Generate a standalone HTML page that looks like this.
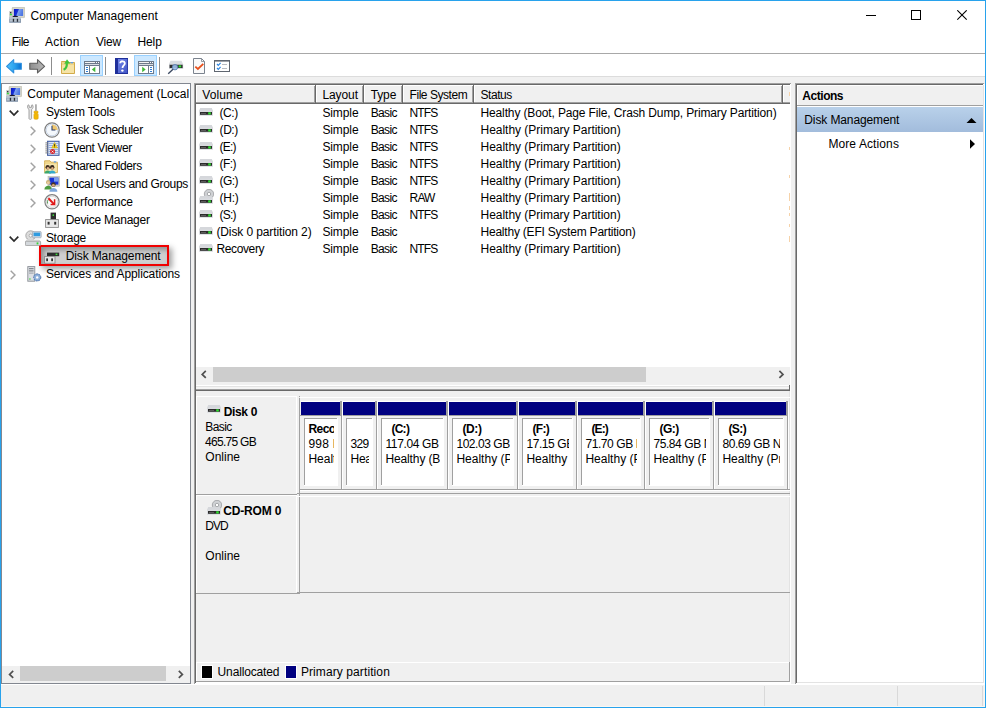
<!DOCTYPE html>
<html>
<head>
<meta charset="utf-8">
<title>Computer Management</title>
<style>
html,body{margin:0;padding:0;}
body{width:986px;height:708px;overflow:hidden;background:#fff;font-family:"Liberation Sans",sans-serif;font-size:12px;color:#000;position:relative;}
.a{position:absolute;display:block;}
.t{position:absolute;white-space:nowrap;line-height:14px;height:14px;font-size:12px;}
.b{font-weight:bold;}

</style>
</head>
<body>
<div class="a " style="left:0px;top:0px;width:986px;height:708px;background:#28a2ec;"></div>
<div class="a " style="left:1px;top:1px;width:984px;height:706px;background:#fff;"></div>
<div class="a " style="left:1px;top:53px;width:984px;height:1px;background:#a8a8a8;"></div>
<div class="a " style="left:1px;top:76px;width:984px;height:631px;background:#f0f0f0;"></div>
<div class="a " style="left:1px;top:76px;width:984px;height:1px;background:#dcdcdc;"></div>
<div class="t " style="left:30.4px;top:9px;letter-spacing:0.07px;">Computer Management</div>
<svg class="a" style="left:866px;top:10px;" width="12" height="12" viewBox="0 0 12 12"><path d="M0 5.5H10" stroke="#000" stroke-width="1" fill="none"/></svg>
<svg class="a" style="left:911px;top:10px;" width="12" height="12" viewBox="0 0 12 12"><rect x="0.5" y="0.5" width="9" height="9" stroke="#000" stroke-width="1" fill="none"/></svg>
<svg class="a" style="left:957px;top:10px;" width="12" height="12" viewBox="0 0 12 12"><path d="M0.3 0.3L9.7 9.7M9.7 0.3L0.3 9.7" stroke="#000" stroke-width="1.1" fill="none"/></svg>
<div class="t " style="left:11.8px;top:35px;letter-spacing:-0.536px;">File</div>
<div class="t " style="left:45px;top:35px;letter-spacing:0.19px;">Action</div>
<div class="t " style="left:95.9px;top:35px;letter-spacing:-0.149px;">View</div>
<div class="t " style="left:137.5px;top:35px;letter-spacing:-0.122px;">Help</div>
<div class="a " style="left:51px;top:57px;width:1px;height:18px;background:#8d8d8d;"></div>
<div class="a " style="left:105px;top:57px;width:1px;height:18px;background:#8d8d8d;"></div>
<div class="a " style="left:159px;top:57px;width:1px;height:18px;background:#8d8d8d;"></div>
<div class="a " style="left:80px;top:55px;width:23px;height:21px;background:#cce8ff;border:1px solid #99d1ff;box-sizing:border-box;"></div>
<div class="a " style="left:134px;top:55px;width:23px;height:21px;background:#cce8ff;border:1px solid #99d1ff;box-sizing:border-box;"></div>
<svg class="a" style="left:6px;top:59px;" width="16" height="15" viewBox="0 0 16 15"><defs><linearGradient id="gb" x1="0" x2="1" y1="0" y2="0"><stop offset="0" stop-color="#52c0f8"/><stop offset="0.55" stop-color="#2aa2ee"/><stop offset="1" stop-color="#0a6fd0"/></linearGradient></defs>
<path d="M0.6 7.3L7.7 0.7V4.3H15.3V10.3H7.7V13.9Z" fill="url(#gb)" stroke="#2b8fde" stroke-width="1.1" stroke-linejoin="round"/></svg>
<svg class="a" style="left:29px;top:59px;" width="17" height="15" viewBox="0 0 17 15"><defs><linearGradient id="gf" x1="0" x2="1" y1="0" y2="0"><stop offset="0" stop-color="#8e8e8e"/><stop offset="1" stop-color="#b8b8b8"/></linearGradient></defs>
<path d="M15.6 7.3L8.5 0.7V4.3H0.8V10.3H8.5V13.9Z" fill="url(#gf)" stroke="#5e5e5e" stroke-width="1.1" stroke-linejoin="round"/></svg>
<svg class="a" style="left:61px;top:58px;" width="15" height="16" viewBox="0 0 15 16"><path d="M0.5 4.5V3.5H5.5L6.5 4.5H13.5V15.5H0.5Z" fill="#efd587" stroke="#d2ab4a" stroke-width="1"/>
<rect x="1" y="7" width="12" height="8" fill="#f6e3a6"/>
<rect x="9.5" y="4" width="2.6" height="1.3" fill="#5b9be6"/>
<path d="M2.6 11.8C5.2 10.5 6 8 5.8 5.2" stroke="#3fc43a" stroke-width="2.2" fill="none"/>
<path d="M3.2 5.8L6 1.2L9.2 5.6Z" fill="#3fc43a"/></svg>
<svg class="a" style="left:84px;top:61px;" width="16" height="13" viewBox="0 0 16 13"><rect x="0" y="0" width="16" height="13" fill="#6d7a8b"/>
<rect x="1" y="1" width="10" height="1" fill="#f2f2f2"/><rect x="12" y="1" width="1" height="1" fill="#fff"/><rect x="14" y="1" width="1" height="1" fill="#fff"/>
<rect x="1" y="3" width="14" height="1" fill="#d8dce2"/><rect x="1" y="5" width="4" height="7" fill="#fff"/><rect x="6" y="5" width="9" height="7" fill="#fff"/>
<rect x="2" y="6" width="2" height="1" fill="#2f7fd6"/><rect x="2" y="8" width="2" height="1" fill="#2f7fd6"/><rect x="2" y="10" width="2" height="1" fill="#2f7fd6"/>
<path d="M11.3 5.8V11.2L7.8 8.5Z" fill="#3fb838"/></svg>
<svg class="a" style="left:138px;top:61px;" width="16" height="13" viewBox="0 0 16 13"><rect x="0" y="0" width="16" height="13" fill="#6d7a8b"/>
<rect x="1" y="1" width="10" height="1" fill="#f2f2f2"/><rect x="12" y="1" width="1" height="1" fill="#fff"/><rect x="14" y="1" width="1" height="1" fill="#fff"/>
<rect x="1" y="3" width="14" height="1" fill="#d8dce2"/><rect x="1" y="5" width="9" height="7" fill="#fff"/><rect x="11" y="5" width="4" height="7" fill="#fff"/>
<rect x="12" y="6" width="2" height="1" fill="#2f7fd6"/><rect x="12" y="8" width="2" height="1" fill="#2f7fd6"/><rect x="12" y="10" width="2" height="1" fill="#2f7fd6"/>
<path d="M4.2 5.8V11.2L7.7 8.5Z" fill="#3fb838"/></svg>
<svg class="a" style="left:115px;top:58px;" width="13" height="16" viewBox="0 0 13 16"><defs><linearGradient id="gh" x1="0" x2="1" y1="0" y2="1"><stop offset="0" stop-color="#7084e6"/><stop offset="1" stop-color="#4256c6"/></linearGradient></defs>
<rect x="0" y="0" width="13" height="16" fill="#1f2f9a"/><rect x="3" y="1" width="9.3" height="14" fill="url(#gh)"/>
<path d="M5.2 5.2C5.2 2.6 9.8 2.6 9.8 5.4C9.8 7.4 7.5 7.6 7.5 10" stroke="#fff" stroke-width="1.8" fill="none"/><circle cx="7.4" cy="12.6" r="1.2" fill="#fff"/></svg>
<svg class="a" style="left:167px;top:60px;" width="17" height="15" viewBox="0 0 17 15"><path d="M3.5 0.8H14.5L16 4H2Z" fill="#d9dce0"/><rect x="2" y="4" width="14.2" height="5" fill="#cfd3d8"/>
<rect x="2.6" y="4.8" width="13" height="3.2" fill="#2c2c2c"/><rect x="11.6" y="5.4" width="2.6" height="2" fill="#2de02d"/>
<circle cx="8" cy="7.2" r="2.7" fill="#9fc0ea" stroke="#5d7fb0" stroke-width="0.9" fill-opacity="0.9"/>
<path d="M6 9.3L1.2 13.8" stroke="#3c4a62" stroke-width="1.4"/></svg>
<svg class="a" style="left:193px;top:58px;" width="13" height="16" viewBox="0 0 13 16"><path d="M0.5 0.5H8.5L11.5 3.5V15.5H0.5Z" fill="#fafafa" stroke="#7b838e" stroke-width="1"/><path d="M8.5 0.5V3.5H11.5" fill="none" stroke="#7b838e" stroke-width="0.8"/>
<path d="M2.3 8.6L4.9 11L10.3 5.9" stroke="#e8501c" stroke-width="1.8" fill="none"/></svg>
<svg class="a" style="left:214px;top:60px;" width="16" height="12" viewBox="0 0 16 12"><rect x="0.5" y="0.5" width="15" height="11" fill="#fff" stroke="#5f6670" stroke-width="1"/><rect x="0" y="0" width="16" height="1.6" fill="#5f6670"/>
<path d="M3 4L4.3 5.4L6.6 2.8" stroke="#2f86e0" stroke-width="1.2" fill="none"/><path d="M3 8L4.3 9.4L6.6 6.8" stroke="#2f86e0" stroke-width="1.2" fill="none"/>
<rect x="8" y="4" width="5" height="1" fill="#b8bcc2"/><rect x="8" y="8" width="5" height="1" fill="#b8bcc2"/></svg>
<div class="a " style="left:1px;top:83px;width:190px;height:601px;background:#fff;border:1px solid #828790;box-sizing:border-box;"></div>
<div class="a " style="left:39px;top:245px;width:130px;height:21px;background:#cfcfcf;box-sizing:border-box;border:2px solid #f00000;box-shadow:3px 3px 6px rgba(0,0,0,0.38), inset 3px 3px 5px rgba(0,0,0,0.30);"></div>
<div class="t " style="left:27.3px;top:87px;letter-spacing:-0.011px;">Computer Management (Local</div>
<div class="t " style="left:45.9px;top:105px;letter-spacing:-0.195px;">System Tools</div>
<svg class="a" style="left:9px;top:109.5px;" width="10" height="7" viewBox="0 0 10 7"><path d="M0.7 0.7L5 5L9.3 0.7" stroke="#2b2b2b" stroke-width="1.7" fill="none"/></svg>
<div class="t " style="left:65.7px;top:123px;letter-spacing:-0.353px;">Task Scheduler</div>
<svg class="a" style="left:30px;top:126px;" width="6" height="10" viewBox="0 0 6 10"><path d="M0.7 0.7L5 5L0.7 9.3" stroke="#a3a3a3" stroke-width="1.5" fill="none"/></svg>
<div class="t " style="left:65.7px;top:141px;letter-spacing:-0.357px;">Event Viewer</div>
<svg class="a" style="left:30px;top:144px;" width="6" height="10" viewBox="0 0 6 10"><path d="M0.7 0.7L5 5L0.7 9.3" stroke="#a3a3a3" stroke-width="1.5" fill="none"/></svg>
<div class="t " style="left:65.3px;top:159px;letter-spacing:-0.396px;">Shared Folders</div>
<svg class="a" style="left:30px;top:162px;" width="6" height="10" viewBox="0 0 6 10"><path d="M0.7 0.7L5 5L0.7 9.3" stroke="#a3a3a3" stroke-width="1.5" fill="none"/></svg>
<div class="t " style="left:65.7px;top:177px;letter-spacing:-0.323px;">Local Users and Groups</div>
<svg class="a" style="left:30px;top:180px;" width="6" height="10" viewBox="0 0 6 10"><path d="M0.7 0.7L5 5L0.7 9.3" stroke="#a3a3a3" stroke-width="1.5" fill="none"/></svg>
<div class="t " style="left:65.7px;top:195px;letter-spacing:-0.137px;">Performance</div>
<svg class="a" style="left:30px;top:198px;" width="6" height="10" viewBox="0 0 6 10"><path d="M0.7 0.7L5 5L0.7 9.3" stroke="#a3a3a3" stroke-width="1.5" fill="none"/></svg>
<div class="t " style="left:65.7px;top:213px;letter-spacing:-0.241px;">Device Manager</div>
<div class="t " style="left:45.9px;top:231px;letter-spacing:-0.276px;">Storage</div>
<svg class="a" style="left:9px;top:235.5px;" width="10" height="7" viewBox="0 0 10 7"><path d="M0.7 0.7L5 5L9.3 0.7" stroke="#2b2b2b" stroke-width="1.7" fill="none"/></svg>
<div class="t " style="left:65.7px;top:249px;letter-spacing:-0.121px;">Disk Management</div>
<div class="t " style="left:45.9px;top:267px;letter-spacing:-0.106px;">Services and Applications</div>
<svg class="a" style="left:10px;top:270px;" width="6" height="10" viewBox="0 0 6 10"><path d="M0.7 0.7L5 5L0.7 9.3" stroke="#a3a3a3" stroke-width="1.5" fill="none"/></svg>
<div class="a " style="left:2px;top:666px;width:188px;height:17px;background:#f0f0f0;"></div>
<div class="a " style="left:20px;top:666px;width:146px;height:15px;background:#cdcdcd;"></div>
<svg class="a" style="left:8px;top:670px;" width="7" height="9" viewBox="0 0 7 9"><path d="M5.2 0.9L1.6 4.4L5.2 7.9" stroke="#505050" stroke-width="1.7" fill="none"/></svg>
<svg class="a" style="left:177px;top:670px;" width="7" height="9" viewBox="0 0 7 9"><path d="M1.8 0.9L5.4 4.4L1.8 7.9" stroke="#505050" stroke-width="1.7" fill="none"/></svg>
<svg class="a" style="left:9px;top:7px;" width="16" height="16" viewBox="0 0 16 16"><defs><linearGradient id="gs9" x1="0" x2="1" y1="0" y2="0.3"><stop offset="0" stop-color="#0812c4"/><stop offset="0.45" stop-color="#1a35d8"/><stop offset="0.55" stop-color="#7fa2ee"/><stop offset="1" stop-color="#4f78e4"/></linearGradient></defs>
<rect x="3.2" y="0.3" width="12.5" height="10.3" rx="0.8" fill="#d8d8cc" stroke="#b4b4a6" stroke-width="0.6"/>
<rect x="4.9" y="2" width="9.2" height="7" fill="url(#gs9)"/>
<rect x="0.2" y="4" width="3.2" height="6.5" fill="#c9c9c9"/><rect x="1" y="5" width="1.4" height="1.4" fill="#3a3a3a"/><rect x="0.9" y="6.8" width="2" height="1.4" fill="#36e23a"/>
<path d="M3.2 10.2C4 8.4 8.6 8.4 9.4 10.2Z" fill="#1a1a2e"/>
<rect x="0.2" y="10.2" width="11.8" height="5.6" fill="#8496ab"/><rect x="0.2" y="10.2" width="11.8" height="1.6" fill="#c4ccd6"/>
<rect x="1" y="12.3" width="10.2" height="2.2" fill="#b9c4d0"/>
<rect x="3.8" y="11.8" width="1.3" height="3" fill="#2a2f38"/><rect x="7.8" y="11.8" width="1.3" height="3" fill="#2a2f38"/></svg>
<svg class="a" style="left:6px;top:86px;" width="16" height="16" viewBox="0 0 16 16"><defs><linearGradient id="gs6" x1="0" x2="1" y1="0" y2="0.3"><stop offset="0" stop-color="#0812c4"/><stop offset="0.45" stop-color="#1a35d8"/><stop offset="0.55" stop-color="#7fa2ee"/><stop offset="1" stop-color="#4f78e4"/></linearGradient></defs>
<rect x="3.2" y="0.3" width="12.5" height="10.3" rx="0.8" fill="#d8d8cc" stroke="#b4b4a6" stroke-width="0.6"/>
<rect x="4.9" y="2" width="9.2" height="7" fill="url(#gs6)"/>
<rect x="0.2" y="4" width="3.2" height="6.5" fill="#c9c9c9"/><rect x="1" y="5" width="1.4" height="1.4" fill="#3a3a3a"/><rect x="0.9" y="6.8" width="2" height="1.4" fill="#36e23a"/>
<path d="M3.2 10.2C4 8.4 8.6 8.4 9.4 10.2Z" fill="#1a1a2e"/>
<rect x="0.2" y="10.2" width="11.8" height="5.6" fill="#8496ab"/><rect x="0.2" y="10.2" width="11.8" height="1.6" fill="#c4ccd6"/>
<rect x="1" y="12.3" width="10.2" height="2.2" fill="#b9c4d0"/>
<rect x="3.8" y="11.8" width="1.3" height="3" fill="#2a2f38"/><rect x="7.8" y="11.8" width="1.3" height="3" fill="#2a2f38"/></svg>
<svg class="a" style="left:27px;top:104px;" width="12" height="16" viewBox="0 0 12 16"><path d="M1.2 0.8C0 2.6 0.4 4.6 2 5.4V14.6C2 15.6 4.6 15.6 4.6 14.6V5.4C6.2 4.6 6.6 2.6 5.4 0.8L4.4 1.4V3.4H2.2V1.4Z" fill="#e6e6e6" stroke="#9a9a9a" stroke-width="0.9"/>
<rect x="8.3" y="0.3" width="1.3" height="7" fill="#8a8a8a"/>
<path d="M7 7.2H11V9.3H10.2V10.2H11.2V14.6C11.2 15.6 6.9 15.6 6.9 14.6V10.2H7.8V9.3H7Z" fill="#f2b705" stroke="#d89a00" stroke-width="0.5"/></svg>
<svg class="a" style="left:44px;top:122px;" width="16" height="16" viewBox="0 0 16 16"><circle cx="8" cy="8" r="7.2" fill="#f4f8fc" stroke="#7c7c7c" stroke-width="1.2"/><circle cx="8" cy="8" r="5.8" fill="none" stroke="#c9d6e6" stroke-width="0.9"/>
<path d="M8 8V2.4A5.6 5.6 0 0 1 13.6 8Z" fill="#f0c76e"/>
<path d="M8 3.8V8H11.4" stroke="#2c3e6e" stroke-width="1.1" fill="none"/></svg>
<svg class="a" style="left:45px;top:140px;" width="15" height="16" viewBox="0 0 15 16"><rect x="2.6" y="1.3" width="11.4" height="14" fill="#e6eefb" stroke="#405ca4" stroke-width="1.1"/>
<g stroke="#86a2d8" stroke-width="0.9"><path d="M3.4 3.4H13.2M3.4 5.4H13.2M3.4 7.4H13.2M3.4 9.4H13.2M3.4 11.4H13.2M3.4 13.4H13.2"/></g>
<g fill="#7e7e7e"><rect x="0.4" y="2.4" width="3" height="1"/><rect x="0.4" y="4.4" width="3" height="1"/><rect x="0.4" y="6.4" width="3" height="1"/><rect x="0.4" y="8.4" width="3" height="1"/><rect x="0.4" y="10.4" width="3" height="1"/><rect x="0.4" y="12.4" width="3" height="1"/></g>
<path d="M9.6 2.4L12.5 8H6.7Z" fill="#f5d018" stroke="#c9a400" stroke-width="0.5"/><rect x="9.15" y="4.2" width="0.9" height="2" fill="#222"/><rect x="9.15" y="6.6" width="0.9" height="0.7" fill="#222"/>
<circle cx="7.6" cy="11.6" r="2.5" fill="#d8242a"/><path d="M6.6 10.6L8.6 12.6M8.6 10.6L6.6 12.6" stroke="#fff" stroke-width="0.8"/></svg>
<svg class="a" style="left:44px;top:159px;" width="15" height="15" viewBox="0 0 15 15"><path d="M0.6 3.2V1.8H6L7 3.2H13.4V13.6H0.6Z" fill="#f0d78c" stroke="#d4ae52" stroke-width="0.9"/><rect x="1.2" y="5" width="11.6" height="8" fill="#f6e4aa"/>
<rect x="9.8" y="2.3" width="2.4" height="1.2" fill="#5b9be6"/>
<path d="M0.4 14.6C0.4 10.6 7 10.6 7 14.6Z" fill="#3ea86a"/><circle cx="3.7" cy="8.3" r="2.2" fill="#43301f"/><ellipse cx="3.9" cy="9.3" rx="1.2" ry="1.3" fill="#e0b088"/>
<path d="M4.8 14.6C4.8 10.6 11.6 10.6 11.6 14.6Z" fill="#35a9c9"/><circle cx="8.2" cy="8.3" r="2.2" fill="#33261c"/><ellipse cx="8.4" cy="9.3" rx="1.2" ry="1.3" fill="#d9a87c"/></svg>
<svg class="a" style="left:44px;top:176px;" width="16" height="16" viewBox="0 0 16 16"><rect x="4" y="0.4" width="11.6" height="9.8" fill="#d0d0c6" stroke="#b0b0a4" stroke-width="0.5"/><rect x="5.4" y="1.6" width="9" height="7" fill="#1a34d4"/><rect x="10" y="1.6" width="4.4" height="4" fill="#7a9cec"/>
<circle cx="4.2" cy="6.2" r="2.2" fill="#c9b27a"/><path d="M0.4 13.4C0.4 8.6 8 8.6 8 13.4Z" fill="#4e9c42"/><circle cx="4.2" cy="6.8" r="1.3" fill="#ecc9a0"/>
<circle cx="9.4" cy="8.6" r="2.3" fill="#4a3424"/><path d="M5.4 15.8C5.4 10.8 13.4 10.8 13.4 15.8Z" fill="#7fa8dc"/><circle cx="9.4" cy="9.3" r="1.4" fill="#d9a87c"/></svg>
<svg class="a" style="left:44px;top:194px;" width="16" height="16" viewBox="0 0 16 16"><circle cx="8" cy="7.8" r="7.1" fill="#fafafa" stroke="#808080" stroke-width="1.2"/><circle cx="8" cy="7.8" r="5.6" fill="none" stroke="#d0d0d0" stroke-width="0.8"/>
<path d="M4.4 4.2L10.2 10.4" stroke="#e01818" stroke-width="2"/><path d="M10.6 5.2V10.4H6.6" stroke="#e01818" stroke-width="1.5" fill="none"/>
<path d="M3.6 9.6A4.6 4.6 0 0 1 4 6" stroke="#3a8a3a" stroke-width="0.8" fill="none"/></svg>
<svg class="a" style="left:45px;top:212px;" width="14" height="16" viewBox="0 0 14 16"><rect x="5.6" y="0.6" width="5.4" height="7" fill="#2e2e2e"/><rect x="7.6" y="2.4" width="1.4" height="1.6" fill="#3de03d"/>
<rect x="0.6" y="7.6" width="12.8" height="7.8" fill="#e8e8e8" stroke="#8a8a8a" stroke-width="0.9"/>
<rect x="2.6" y="9.8" width="2" height="2.8" fill="#333"/><rect x="9.2" y="9.8" width="2" height="2.8" fill="#333"/></svg>
<svg class="a" style="left:25px;top:230px;" width="17" height="16" viewBox="0 0 17 16"><circle cx="5.6" cy="5.6" r="4.8" fill="#dcdcdc" stroke="#9a9a9a" stroke-width="0.8"/><circle cx="5.6" cy="5.6" r="1.5" fill="#fff" stroke="#8a8a8a" stroke-width="0.6"/>
<rect x="7.6" y="1.6" width="8.6" height="6.2" rx="0.8" fill="#d6dce4" stroke="#8a96a6" stroke-width="0.6"/><rect x="8.6" y="2.6" width="6.6" height="3.6" fill="#2f9be0"/>
<path d="M1.4 9.6H14.4L15.6 11.6H0.4Z" fill="#e2e2e2"/><rect x="0.4" y="11.2" width="15.2" height="4.4" rx="0.8" fill="#d4d8dc" stroke="#8e8e8e" stroke-width="0.7"/><rect x="11.6" y="12.4" width="1.8" height="2" fill="#3ad23a"/></svg>
<svg class="a" style="left:44px;top:252px;" width="16" height="12" viewBox="0 0 16 12"><rect x="3" y="0.6" width="12.2" height="3.6" fill="#2e2e2e"/><rect x="11.6" y="1.6" width="1.8" height="1.5" fill="#3de03d"/>
<rect x="0.6" y="4.4" width="10.4" height="6.8" fill="#e6e6e6" stroke="#8a8a8a" stroke-width="0.9"/>
<rect x="2.2" y="6.4" width="1.8" height="2.8" fill="#333"/><rect x="7.2" y="6.4" width="1.8" height="2.8" fill="#333"/></svg>
<svg class="a" style="left:27px;top:266px;" width="15" height="16" viewBox="0 0 15 16"><rect x="0.8" y="0.6" width="7" height="14.6" fill="#dcdfe3" stroke="#8a8f96" stroke-width="0.9"/>
<rect x="2" y="2.2" width="4.6" height="1" fill="#6e747c"/><rect x="2" y="4.4" width="4.6" height="1" fill="#6e747c"/><rect x="2" y="6.6" width="4.6" height="1" fill="#9aa0a8"/><rect x="2.2" y="12.4" width="1.4" height="1.2" fill="#3ad23a"/>
<circle cx="10.2" cy="11.4" r="3.6" fill="#7fa2d0" stroke="#4f74aa" stroke-width="1" stroke-dasharray="1.5 1.1"/><circle cx="10.2" cy="11.4" r="2.7" fill="#8fb0da"/><circle cx="10.2" cy="11.4" r="1.2" fill="#fff"/></svg>
<div class="a " style="left:194px;top:83px;width:597px;height:601px;background:#a0a0a0;"></div>
<div class="a " style="left:195px;top:84px;width:596px;height:600px;background:#fff;"></div>
<div class="a " style="left:195px;top:84px;width:595px;height:599px;background:#696969;"></div>
<div class="a " style="left:196px;top:85px;width:594px;height:598px;background:#e3e3e3;"></div>
<div class="a " style="left:196px;top:85px;width:593px;height:597px;background:#f0f0f0;"></div>
<div class="a " style="left:196px;top:85px;width:594px;height:300px;background:#fff;"></div>
<div class="a " style="left:196px;top:85px;width:594px;height:19px;background:#f0f0f0;"></div>
<div class="a " style="left:196px;top:85px;width:594px;height:1px;background:#fff;"></div>
<div class="a " style="left:196px;top:102px;width:594px;height:1px;background:#a0a0a0;"></div>
<div class="a " style="left:196px;top:103px;width:594px;height:1px;background:#696969;"></div>
<div class="a " style="left:196px;top:85px;width:1px;height:17px;background:#fff;"></div>
<div class="a " style="left:314px;top:86px;width:1px;height:17px;background:#a0a0a0;"></div>
<div class="a " style="left:315px;top:85px;width:1px;height:19px;background:#696969;"></div>
<div class="a " style="left:316px;top:85px;width:1px;height:17px;background:#fff;"></div>
<div class="t " style="left:202.2px;top:88px;letter-spacing:0.111px;">Volume</div>
<div class="a " style="left:362px;top:86px;width:1px;height:17px;background:#a0a0a0;"></div>
<div class="a " style="left:363px;top:85px;width:1px;height:19px;background:#696969;"></div>
<div class="a " style="left:364px;top:85px;width:1px;height:17px;background:#fff;"></div>
<div class="t " style="left:322.4px;top:88px;letter-spacing:-0.089px;">Layout</div>
<div class="a " style="left:401px;top:86px;width:1px;height:17px;background:#a0a0a0;"></div>
<div class="a " style="left:402px;top:85px;width:1px;height:19px;background:#696969;"></div>
<div class="a " style="left:403px;top:85px;width:1px;height:17px;background:#fff;"></div>
<div class="t " style="left:370.7px;top:88px;letter-spacing:-0.129px;">Type</div>
<div class="a " style="left:472px;top:86px;width:1px;height:17px;background:#a0a0a0;"></div>
<div class="a " style="left:473px;top:85px;width:1px;height:19px;background:#696969;"></div>
<div class="a " style="left:474px;top:85px;width:1px;height:17px;background:#fff;"></div>
<div class="t " style="left:409.6px;top:88px;letter-spacing:-0.462px;">File System</div>
<div class="a " style="left:781px;top:86px;width:1px;height:17px;background:#a0a0a0;"></div>
<div class="a " style="left:782px;top:85px;width:1px;height:19px;background:#696969;"></div>
<div class="a " style="left:783px;top:85px;width:1px;height:17px;background:#fff;"></div>
<div class="t " style="left:480.5px;top:88px;letter-spacing:-0.439px;">Status</div>
<div class="a " style="left:789px;top:92px;width:1px;height:4px;background:#f6d2a8;"></div>
<div class="a " style="left:789px;top:147px;width:1px;height:3px;background:#f6d2a8;"></div>
<div class="a " style="left:789px;top:175px;width:1px;height:3px;background:#f6d2a8;"></div>
<div class="a " style="left:789px;top:193px;width:1px;height:8px;background:#f6d2a8;"></div>
<div class="a " style="left:789px;top:206px;width:1px;height:4px;background:#f6d2a8;"></div>
<div class="a " style="left:789px;top:213px;width:1px;height:3px;background:#f6d2a8;"></div>
<div class="a " style="left:789px;top:224px;width:1px;height:3px;background:#f6d2a8;"></div>
<div class="a " style="left:789px;top:236px;width:1px;height:6px;background:#f6d2a8;"></div>
<div class="t " style="left:219.6px;top:106px;letter-spacing:-0.475px;">(C:)</div>
<div class="t " style="left:322.4px;top:106px;letter-spacing:-0.098px;">Simple</div>
<div class="t " style="left:370.7px;top:106px;letter-spacing:-0.649px;">Basic</div>
<div class="t " style="left:409.6px;top:106px;letter-spacing:-0.886px;">NTFS</div>
<div class="t " style="left:480.5px;top:106px;letter-spacing:-0.133px;">Healthy (Boot, Page File, Crash Dump, Primary Partition)</div>
<svg class="a" style="left:199px;top:108px;" width="14" height="8" viewBox="0 0 14 8"><path d="M1.2 0H12.8L14 3H0Z" fill="#d5d7db"/><rect x="0" y="2.6" width="14" height="5.2" rx="0.6" fill="#d9dbdf"/><rect x="1" y="4" width="12" height="2.8" fill="#2b2b2b"/><rect x="2" y="5" width="5" height="0.8" fill="#6a6a6a"/><rect x="9.2" y="4.3" width="2.6" height="2.2" fill="#2fe32f"/></svg>
<div class="t " style="left:219.6px;top:123px;letter-spacing:-0.45px;">(D:)</div>
<div class="t " style="left:322.4px;top:123px;letter-spacing:-0.098px;">Simple</div>
<div class="t " style="left:370.7px;top:123px;letter-spacing:-0.649px;">Basic</div>
<div class="t " style="left:409.6px;top:123px;letter-spacing:-0.886px;">NTFS</div>
<div class="t " style="left:480.5px;top:123px;letter-spacing:-0.022px;">Healthy (Primary Partition)</div>
<svg class="a" style="left:199px;top:125px;" width="14" height="8" viewBox="0 0 14 8"><path d="M1.2 0H12.8L14 3H0Z" fill="#d5d7db"/><rect x="0" y="2.6" width="14" height="5.2" rx="0.6" fill="#d9dbdf"/><rect x="1" y="4" width="12" height="2.8" fill="#2b2b2b"/><rect x="2" y="5" width="5" height="0.8" fill="#6a6a6a"/><rect x="9.2" y="4.3" width="2.6" height="2.2" fill="#2fe32f"/></svg>
<div class="t " style="left:219.6px;top:140px;letter-spacing:-0.786px;">(E:)</div>
<div class="t " style="left:322.4px;top:140px;letter-spacing:-0.098px;">Simple</div>
<div class="t " style="left:370.7px;top:140px;letter-spacing:-0.649px;">Basic</div>
<div class="t " style="left:409.6px;top:140px;letter-spacing:-0.886px;">NTFS</div>
<div class="t " style="left:480.5px;top:140px;letter-spacing:-0.022px;">Healthy (Primary Partition)</div>
<svg class="a" style="left:199px;top:142px;" width="14" height="8" viewBox="0 0 14 8"><path d="M1.2 0H12.8L14 3H0Z" fill="#d5d7db"/><rect x="0" y="2.6" width="14" height="5.2" rx="0.6" fill="#d9dbdf"/><rect x="1" y="4" width="12" height="2.8" fill="#2b2b2b"/><rect x="2" y="5" width="5" height="0.8" fill="#6a6a6a"/><rect x="9.2" y="4.3" width="2.6" height="2.2" fill="#2fe32f"/></svg>
<div class="t " style="left:219.6px;top:157px;letter-spacing:-0.614px;">(F:)</div>
<div class="t " style="left:322.4px;top:157px;letter-spacing:-0.098px;">Simple</div>
<div class="t " style="left:370.7px;top:157px;letter-spacing:-0.649px;">Basic</div>
<div class="t " style="left:409.6px;top:157px;letter-spacing:-0.886px;">NTFS</div>
<div class="t " style="left:480.5px;top:157px;letter-spacing:-0.022px;">Healthy (Primary Partition)</div>
<svg class="a" style="left:199px;top:159px;" width="14" height="8" viewBox="0 0 14 8"><path d="M1.2 0H12.8L14 3H0Z" fill="#d5d7db"/><rect x="0" y="2.6" width="14" height="5.2" rx="0.6" fill="#d9dbdf"/><rect x="1" y="4" width="12" height="2.8" fill="#2b2b2b"/><rect x="2" y="5" width="5" height="0.8" fill="#6a6a6a"/><rect x="9.2" y="4.3" width="2.6" height="2.2" fill="#2fe32f"/></svg>
<div class="t " style="left:219.6px;top:174px;letter-spacing:-0.618px;">(G:)</div>
<div class="t " style="left:322.4px;top:174px;letter-spacing:-0.098px;">Simple</div>
<div class="t " style="left:370.7px;top:174px;letter-spacing:-0.649px;">Basic</div>
<div class="t " style="left:409.6px;top:174px;letter-spacing:-0.886px;">NTFS</div>
<div class="t " style="left:480.5px;top:174px;letter-spacing:-0.022px;">Healthy (Primary Partition)</div>
<svg class="a" style="left:199px;top:176px;" width="14" height="8" viewBox="0 0 14 8"><path d="M1.2 0H12.8L14 3H0Z" fill="#d5d7db"/><rect x="0" y="2.6" width="14" height="5.2" rx="0.6" fill="#d9dbdf"/><rect x="1" y="4" width="12" height="2.8" fill="#2b2b2b"/><rect x="2" y="5" width="5" height="0.8" fill="#6a6a6a"/><rect x="9.2" y="4.3" width="2.6" height="2.2" fill="#2fe32f"/></svg>
<div class="t " style="left:219.6px;top:191px;letter-spacing:-0.25px;">(H:)</div>
<div class="t " style="left:322.4px;top:191px;letter-spacing:-0.098px;">Simple</div>
<div class="t " style="left:370.7px;top:191px;letter-spacing:-0.649px;">Basic</div>
<div class="t " style="left:409.6px;top:191px;letter-spacing:-0.854px;">RAW</div>
<div class="t " style="left:480.5px;top:191px;letter-spacing:-0.022px;">Healthy (Primary Partition)</div>
<svg class="a" style="left:199px;top:189px;" width="15" height="15" viewBox="0 0 15 15"><circle cx="10" cy="5" r="4.7" fill="#cfd1d4" stroke="#9a9c9f" stroke-width="0.8"/><circle cx="10" cy="5" r="1.7" fill="#fff" stroke="#8e9093" stroke-width="0.7"/><g transform="translate(0,7)"><path d="M1.2 0H12.8L14 3H0Z" fill="#d5d7db"/><rect x="0" y="2.6" width="14" height="5.2" rx="0.6" fill="#d9dbdf"/><rect x="1" y="4" width="12" height="2.8" fill="#2b2b2b"/><rect x="2" y="5" width="5" height="0.8" fill="#6a6a6a"/><rect x="9.2" y="4.3" width="2.6" height="2.2" fill="#2fe32f"/></g></svg>
<div class="t " style="left:219.6px;top:208px;letter-spacing:-0.786px;">(S:)</div>
<div class="t " style="left:322.4px;top:208px;letter-spacing:-0.098px;">Simple</div>
<div class="t " style="left:370.7px;top:208px;letter-spacing:-0.649px;">Basic</div>
<div class="t " style="left:409.6px;top:208px;letter-spacing:-0.886px;">NTFS</div>
<div class="t " style="left:480.5px;top:208px;letter-spacing:-0.022px;">Healthy (Primary Partition)</div>
<svg class="a" style="left:199px;top:210px;" width="14" height="8" viewBox="0 0 14 8"><path d="M1.2 0H12.8L14 3H0Z" fill="#d5d7db"/><rect x="0" y="2.6" width="14" height="5.2" rx="0.6" fill="#d9dbdf"/><rect x="1" y="4" width="12" height="2.8" fill="#2b2b2b"/><rect x="2" y="5" width="5" height="0.8" fill="#6a6a6a"/><rect x="9.2" y="4.3" width="2.6" height="2.2" fill="#2fe32f"/></svg>
<div class="t " style="left:216.4px;top:225px;letter-spacing:-0.109px;">(Disk 0 partition 2)</div>
<div class="t " style="left:322.4px;top:225px;letter-spacing:-0.098px;">Simple</div>
<div class="t " style="left:370.7px;top:225px;letter-spacing:-0.649px;">Basic</div>
<div class="t " style="left:480.5px;top:225px;letter-spacing:-0.213px;">Healthy (EFI System Partition)</div>
<svg class="a" style="left:199px;top:227px;" width="14" height="8" viewBox="0 0 14 8"><path d="M1.2 0H12.8L14 3H0Z" fill="#d5d7db"/><rect x="0" y="2.6" width="14" height="5.2" rx="0.6" fill="#d9dbdf"/><rect x="1" y="4" width="12" height="2.8" fill="#2b2b2b"/><rect x="2" y="5" width="5" height="0.8" fill="#6a6a6a"/><rect x="9.2" y="4.3" width="2.6" height="2.2" fill="#2fe32f"/></svg>
<div class="t " style="left:216.4px;top:242px;letter-spacing:-0.361px;">Recovery</div>
<div class="t " style="left:322.4px;top:242px;letter-spacing:-0.098px;">Simple</div>
<div class="t " style="left:370.7px;top:242px;letter-spacing:-0.649px;">Basic</div>
<div class="t " style="left:409.6px;top:242px;letter-spacing:-0.886px;">NTFS</div>
<div class="t " style="left:480.5px;top:242px;letter-spacing:-0.022px;">Healthy (Primary Partition)</div>
<svg class="a" style="left:199px;top:244px;" width="14" height="8" viewBox="0 0 14 8"><path d="M1.2 0H12.8L14 3H0Z" fill="#d5d7db"/><rect x="0" y="2.6" width="14" height="5.2" rx="0.6" fill="#d9dbdf"/><rect x="1" y="4" width="12" height="2.8" fill="#2b2b2b"/><rect x="2" y="5" width="5" height="0.8" fill="#6a6a6a"/><rect x="9.2" y="4.3" width="2.6" height="2.2" fill="#2fe32f"/></svg>
<div class="a " style="left:196px;top:367px;width:594px;height:18px;background:#f0f0f0;"></div>
<div class="a " style="left:213px;top:367px;width:433px;height:15px;background:#cdcdcd;"></div>
<svg class="a" style="left:200px;top:370px;" width="8" height="10" viewBox="0 0 8 10"><path d="M5.8 0.9L2.2 4.4L5.8 7.9" stroke="#505050" stroke-width="1.7" fill="none"/></svg>
<svg class="a" style="left:777px;top:370px;" width="8" height="10" viewBox="0 0 8 10"><path d="M2.4 0.9L6 4.4L2.4 7.9" stroke="#505050" stroke-width="1.7" fill="none"/></svg>
<div class="a " style="left:196px;top:385px;width:594px;height:1px;background:#fff;"></div>
<div class="a " style="left:196px;top:386px;width:594px;height:1px;background:#e3e3e3;"></div>
<div class="a " style="left:196px;top:387px;width:594px;height:2px;background:#f4f4f4;"></div>
<div class="a " style="left:196px;top:389px;width:594px;height:1px;background:#a0a0a0;"></div>
<div class="a " style="left:196px;top:390px;width:594px;height:1px;background:#696969;"></div>
<div class="a " style="left:789px;top:385px;width:1px;height:6px;background:#696969;"></div>
<div class="a " style="left:196px;top:396px;width:101px;height:1px;background:#fff;"></div>
<div class="a " style="left:196px;top:396px;width:1px;height:98px;background:#fff;"></div>
<div class="a " style="left:196px;top:494px;width:101px;height:1px;background:#a0a0a0;"></div>
<div class="a " style="left:297px;top:493px;width:2px;height:1px;background:#a0a0a0;"></div>
<div class="a " style="left:299px;top:398px;width:1px;height:196px;background:#a0a0a0;"></div>
<div class="a " style="left:299px;top:396px;width:1px;height:1px;background:#a0a0a0;"></div>
<div class="a " style="left:296px;top:397px;width:1px;height:96px;background:#fff;"></div>
<div class="a " style="left:296px;top:496px;width:1px;height:96px;background:#fff;"></div>
<div class="a " style="left:299px;top:493px;width:491px;height:1px;background:#a0a0a0;"></div>
<div class="a " style="left:297px;top:496px;width:493px;height:1px;background:#fff;"></div>
<svg class="a" style="left:207px;top:405px;" width="14" height="8" viewBox="0 0 14 8"><path d="M1.2 0H12.8L14 3H0Z" fill="#d5d7db"/><rect x="0" y="2.6" width="14" height="5.2" rx="0.6" fill="#d9dbdf"/><rect x="1" y="4" width="12" height="2.8" fill="#2b2b2b"/><rect x="2" y="5" width="5" height="0.8" fill="#6a6a6a"/><rect x="9.2" y="4.3" width="2.6" height="2.2" fill="#2fe32f"/></svg>
<div class="t b" style="left:223.7px;top:405px;letter-spacing:-0.343px;">Disk 0</div>
<div class="t " style="left:205.3px;top:420px;letter-spacing:-0.589px;">Basic</div>
<div class="t " style="left:205.1px;top:435px;letter-spacing:-0.719px;">465.75 GB</div>
<div class="t " style="left:205.3px;top:450px;letter-spacing:0.002px;">Online</div>
<div class="a " style="left:300px;top:397px;width:490px;height:1px;background:#fff;"></div>
<div class="a " style="left:301px;top:401px;width:487px;height:1px;background:#fff;"></div>
<div class="a " style="left:300px;top:415px;width:488px;height:1px;background:#a0a0a0;"></div>
<div class="a " style="left:300px;top:489px;width:490px;height:1px;background:#a0a0a0;"></div>
<div class="a " style="left:300px;top:490px;width:490px;height:1px;background:#fff;"></div>
<div class="a " style="left:301px;top:402px;width:39px;height:13px;background:#000080;"></div>
<div class="a " style="left:340px;top:401px;width:2px;height:15px;background:#a0a0a0;"></div>
<div class="a " style="left:341px;top:416px;width:1px;height:73px;background:#a0a0a0;"></div>
<div class="a " style="left:342px;top:402px;width:1px;height:87px;background:#fff;"></div>
<div class="a " style="left:304px;top:418px;width:34px;height:68px;background:#fff;"></div>
<div class="a " style="left:304px;top:418px;width:33px;height:1px;background:#a0a0a0;"></div>
<div class="a " style="left:304px;top:418px;width:1px;height:67px;background:#a0a0a0;"></div>
<div class="a" style="left:305px;top:419px;width:29px;height:60px;overflow:hidden;"><div class="t b" style="left:3.4px;top:3px;letter-spacing:-0.536px;">Recovery</div></div>
<div class="a" style="left:305px;top:419px;width:29px;height:60px;overflow:hidden;"><div class="t " style="left:3.4px;top:18px;letter-spacing:0.242px;">998 MB NTFS</div></div>
<div class="a" style="left:305px;top:419px;width:29px;height:60px;overflow:hidden;"><div class="t " style="left:3.4px;top:33px;letter-spacing:0.011px;">Healthy (Primary Partition)</div></div>
<div class="a " style="left:343px;top:402px;width:32px;height:13px;background:#000080;"></div>
<div class="a " style="left:375px;top:401px;width:2px;height:15px;background:#a0a0a0;"></div>
<div class="a " style="left:376px;top:416px;width:1px;height:73px;background:#a0a0a0;"></div>
<div class="a " style="left:377px;top:402px;width:1px;height:87px;background:#fff;"></div>
<div class="a " style="left:346px;top:418px;width:27px;height:68px;background:#fff;"></div>
<div class="a " style="left:346px;top:418px;width:26px;height:1px;background:#a0a0a0;"></div>
<div class="a " style="left:346px;top:418px;width:1px;height:67px;background:#a0a0a0;"></div>
<div class="a" style="left:347px;top:419px;width:22px;height:60px;overflow:hidden;"><div class="t " style="left:3.4px;top:18px;letter-spacing:-0.677px;">329 MB</div></div>
<div class="a" style="left:347px;top:419px;width:22px;height:60px;overflow:hidden;"><div class="t " style="left:3.4px;top:33px;letter-spacing:-0.18px;">Healthy (EFI System Partition)</div></div>
<div class="a " style="left:378px;top:402px;width:68px;height:13px;background:#000080;"></div>
<div class="a " style="left:446px;top:401px;width:2px;height:15px;background:#a0a0a0;"></div>
<div class="a " style="left:447px;top:416px;width:1px;height:73px;background:#a0a0a0;"></div>
<div class="a " style="left:448px;top:402px;width:1px;height:87px;background:#fff;"></div>
<div class="a " style="left:381px;top:418px;width:63px;height:68px;background:#fff;"></div>
<div class="a " style="left:381px;top:418px;width:62px;height:1px;background:#a0a0a0;"></div>
<div class="a " style="left:381px;top:418px;width:1px;height:67px;background:#a0a0a0;"></div>
<div class="a" style="left:382px;top:419px;width:58px;height:60px;overflow:hidden;"><div class="t b" style="left:9.4px;top:3px;letter-spacing:-0.714px;">(C:)</div></div>
<div class="a" style="left:382px;top:419px;width:58px;height:60px;overflow:hidden;"><div class="t " style="left:3.4px;top:18px;letter-spacing:-0.348px;">117.04 GB NTFS</div></div>
<div class="a" style="left:382px;top:419px;width:58px;height:60px;overflow:hidden;"><div class="t " style="left:3.4px;top:33px;letter-spacing:-0.115px;">Healthy (Boot, Page File, Crash Dump, Primary Partition)</div></div>
<div class="a " style="left:449px;top:402px;width:67px;height:13px;background:#000080;"></div>
<div class="a " style="left:516px;top:401px;width:2px;height:15px;background:#a0a0a0;"></div>
<div class="a " style="left:517px;top:416px;width:1px;height:73px;background:#a0a0a0;"></div>
<div class="a " style="left:518px;top:402px;width:1px;height:87px;background:#fff;"></div>
<div class="a " style="left:452px;top:418px;width:62px;height:68px;background:#fff;"></div>
<div class="a " style="left:452px;top:418px;width:61px;height:1px;background:#a0a0a0;"></div>
<div class="a " style="left:452px;top:418px;width:1px;height:67px;background:#a0a0a0;"></div>
<div class="a" style="left:453px;top:419px;width:57px;height:60px;overflow:hidden;"><div class="t b" style="left:9.4px;top:3px;letter-spacing:-0.339px;">(D:)</div></div>
<div class="a" style="left:453px;top:419px;width:57px;height:60px;overflow:hidden;"><div class="t " style="left:3.4px;top:18px;letter-spacing:-0.438px;">102.03 GB NTFS</div></div>
<div class="a" style="left:453px;top:419px;width:57px;height:60px;overflow:hidden;"><div class="t " style="left:3.4px;top:33px;letter-spacing:0.011px;">Healthy (Primary Partition)</div></div>
<div class="a " style="left:519px;top:402px;width:56px;height:13px;background:#000080;"></div>
<div class="a " style="left:575px;top:401px;width:2px;height:15px;background:#a0a0a0;"></div>
<div class="a " style="left:576px;top:416px;width:1px;height:73px;background:#a0a0a0;"></div>
<div class="a " style="left:577px;top:402px;width:1px;height:87px;background:#fff;"></div>
<div class="a " style="left:522px;top:418px;width:51px;height:68px;background:#fff;"></div>
<div class="a " style="left:522px;top:418px;width:50px;height:1px;background:#a0a0a0;"></div>
<div class="a " style="left:522px;top:418px;width:1px;height:67px;background:#a0a0a0;"></div>
<div class="a" style="left:523px;top:419px;width:46px;height:60px;overflow:hidden;"><div class="t b" style="left:9.4px;top:3px;letter-spacing:-0.657px;">(F:)</div></div>
<div class="a" style="left:523px;top:419px;width:46px;height:60px;overflow:hidden;"><div class="t " style="left:3.4px;top:18px;letter-spacing:-0.411px;">17.15 GB NTFS</div></div>
<div class="a" style="left:523px;top:419px;width:46px;height:60px;overflow:hidden;"><div class="t " style="left:3.4px;top:33px;letter-spacing:0.011px;">Healthy (Primary Partition)</div></div>
<div class="a " style="left:578px;top:402px;width:65px;height:13px;background:#000080;"></div>
<div class="a " style="left:643px;top:401px;width:2px;height:15px;background:#a0a0a0;"></div>
<div class="a " style="left:644px;top:416px;width:1px;height:73px;background:#a0a0a0;"></div>
<div class="a " style="left:645px;top:402px;width:1px;height:87px;background:#fff;"></div>
<div class="a " style="left:581px;top:418px;width:60px;height:68px;background:#fff;"></div>
<div class="a " style="left:581px;top:418px;width:59px;height:1px;background:#a0a0a0;"></div>
<div class="a " style="left:581px;top:418px;width:1px;height:67px;background:#a0a0a0;"></div>
<div class="a" style="left:582px;top:419px;width:55px;height:60px;overflow:hidden;"><div class="t b" style="left:9.4px;top:3px;letter-spacing:-0.85px;">(E:)</div></div>
<div class="a" style="left:582px;top:419px;width:55px;height:60px;overflow:hidden;"><div class="t " style="left:3.4px;top:18px;letter-spacing:-0.411px;">71.70 GB NTFS</div></div>
<div class="a" style="left:582px;top:419px;width:55px;height:60px;overflow:hidden;"><div class="t " style="left:3.4px;top:33px;letter-spacing:0.011px;">Healthy (Primary Partition)</div></div>
<div class="a " style="left:646px;top:402px;width:66px;height:13px;background:#000080;"></div>
<div class="a " style="left:712px;top:401px;width:2px;height:15px;background:#a0a0a0;"></div>
<div class="a " style="left:713px;top:416px;width:1px;height:73px;background:#a0a0a0;"></div>
<div class="a " style="left:714px;top:402px;width:1px;height:87px;background:#fff;"></div>
<div class="a " style="left:649px;top:418px;width:61px;height:68px;background:#fff;"></div>
<div class="a " style="left:649px;top:418px;width:60px;height:1px;background:#a0a0a0;"></div>
<div class="a " style="left:649px;top:418px;width:1px;height:67px;background:#a0a0a0;"></div>
<div class="a" style="left:650px;top:419px;width:56px;height:60px;overflow:hidden;"><div class="t b" style="left:9.4px;top:3px;letter-spacing:-0.482px;">(G:)</div></div>
<div class="a" style="left:650px;top:419px;width:56px;height:60px;overflow:hidden;"><div class="t " style="left:3.4px;top:18px;letter-spacing:-0.411px;">75.84 GB NTFS</div></div>
<div class="a" style="left:650px;top:419px;width:56px;height:60px;overflow:hidden;"><div class="t " style="left:3.4px;top:33px;letter-spacing:0.011px;">Healthy (Primary Partition)</div></div>
<div class="a " style="left:715px;top:402px;width:71px;height:13px;background:#000080;"></div>
<div class="a " style="left:786px;top:401px;width:2px;height:15px;background:#a0a0a0;"></div>
<div class="a " style="left:787px;top:416px;width:1px;height:73px;background:#a0a0a0;"></div>
<div class="a " style="left:788px;top:402px;width:1px;height:87px;background:#fff;"></div>
<div class="a " style="left:718px;top:418px;width:66px;height:68px;background:#fff;"></div>
<div class="a " style="left:718px;top:418px;width:65px;height:1px;background:#a0a0a0;"></div>
<div class="a " style="left:718px;top:418px;width:1px;height:67px;background:#a0a0a0;"></div>
<div class="a" style="left:719px;top:419px;width:61px;height:60px;overflow:hidden;"><div class="t b" style="left:9.4px;top:3px;letter-spacing:-0.525px;">(S:)</div></div>
<div class="a" style="left:719px;top:419px;width:61px;height:60px;overflow:hidden;"><div class="t " style="left:3.4px;top:18px;letter-spacing:-0.411px;">80.69 GB NTFS</div></div>
<div class="a" style="left:719px;top:419px;width:61px;height:60px;overflow:hidden;"><div class="t " style="left:3.4px;top:33px;letter-spacing:0.011px;">Healthy (Primary Partition)</div></div>
<div class="a " style="left:196px;top:495px;width:101px;height:1px;background:#fff;"></div>
<div class="a " style="left:196px;top:495px;width:1px;height:98px;background:#fff;"></div>
<div class="a " style="left:196px;top:593px;width:104px;height:1px;background:#a0a0a0;"></div>
<div class="a " style="left:297px;top:592px;width:493px;height:1px;background:#a0a0a0;"></div>
<svg class="a" style="left:207px;top:500px;" width="15" height="15" viewBox="0 0 15 15"><circle cx="10" cy="5" r="4.7" fill="#cfd1d4" stroke="#9a9c9f" stroke-width="0.8"/><circle cx="10" cy="5" r="1.7" fill="#fff" stroke="#8e9093" stroke-width="0.7"/><g transform="translate(0,7)"><path d="M1.2 0H12.8L14 3H0Z" fill="#d5d7db"/><rect x="0" y="2.6" width="14" height="5.2" rx="0.6" fill="#d9dbdf"/><rect x="1" y="4" width="12" height="2.8" fill="#2b2b2b"/><rect x="2" y="5" width="5" height="0.8" fill="#6a6a6a"/><rect x="9.2" y="4.3" width="2.6" height="2.2" fill="#2fe32f"/></g></svg>
<div class="t b" style="left:223.2px;top:504px;letter-spacing:-0.143px;">CD-ROM 0</div>
<div class="t " style="left:205.3px;top:519px;letter-spacing:-0.981px;">DVD</div>
<div class="t " style="left:205.3px;top:549px;letter-spacing:0.002px;">Online</div>
<div class="a " style="left:196px;top:662px;width:594px;height:1px;background:#fff;"></div>
<div class="a " style="left:196px;top:662px;width:1px;height:19px;background:#fff;"></div>
<div class="a " style="left:196px;top:681px;width:594px;height:1px;background:#a0a0a0;"></div>
<div class="a " style="left:789px;top:662px;width:1px;height:20px;background:#a0a0a0;"></div>
<div class="a " style="left:196px;top:682px;width:594px;height:1px;background:#fff;"></div>
<div class="a " style="left:201px;top:665px;width:12px;height:14px;background:#fff;"></div>
<div class="a " style="left:202px;top:666px;width:10px;height:12px;background:#000;"></div>
<div class="t " style="left:217.6px;top:665px;letter-spacing:-0.152px;">Unallocated</div>
<div class="a " style="left:285px;top:665px;width:12px;height:14px;background:#fff;"></div>
<div class="a " style="left:286px;top:666px;width:10px;height:12px;background:#000080;"></div>
<div class="t " style="left:300.9px;top:665px;letter-spacing:0.097px;">Primary partition</div>
<div class="a " style="left:795px;top:83px;width:189px;height:601px;background:#a0a0a0;"></div>
<div class="a " style="left:984px;top:84px;width:1px;height:600px;background:#fff;"></div>
<div class="a " style="left:796px;top:84px;width:189px;height:600px;background:#fff;"></div>
<div class="a " style="left:796px;top:84px;width:187px;height:599px;background:#696969;"></div>
<div class="a " style="left:983px;top:85px;width:1px;height:598px;background:#e3e3e3;"></div>
<div class="a " style="left:797px;top:85px;width:187px;height:598px;background:#e3e3e3;"></div>
<div class="a " style="left:797px;top:85px;width:186px;height:597px;background:#fff;"></div>
<div class="a " style="left:797px;top:85px;width:186px;height:20px;background:#f0f0f0;"></div>
<div class="a " style="left:797px;top:85px;width:186px;height:1px;background:#fff;"></div>
<div class="a " style="left:797px;top:85px;width:1px;height:20px;background:#fff;"></div>
<div class="a " style="left:797px;top:105px;width:186px;height:1px;background:#a0a0a0;"></div>
<div class="a " style="left:797px;top:107px;width:186px;height:25px;background:linear-gradient(#b9d1ea,#a2bcdc);"></div>
<div class="t b" style="left:802.3px;top:89px;letter-spacing:-0.459px;">Actions</div>
<div class="t " style="left:804.3px;top:113px;letter-spacing:-0.115px;">Disk Management</div>
<div class="t " style="left:828.4px;top:137px;letter-spacing:0.102px;">More Actions</div>
<svg class="a" style="left:966px;top:118px;" width="11" height="5" viewBox="0 0 11 5"><path d="M0.5 5L5.5 0L10.5 5Z" fill="#000"/></svg>
<svg class="a" style="left:970px;top:139px;" width="5" height="10" viewBox="0 0 5 10"><path d="M0 0.3L5 5L0 9.7Z" fill="#000"/></svg>
<div class="a " style="left:1px;top:684px;width:984px;height:23px;background:#f0f0f0;"></div>
<div class="a " style="left:1px;top:684px;width:984px;height:1px;background:#fff;"></div>
<div class="a " style="left:764px;top:686px;width:1px;height:20px;background:#d9d9d9;"></div>
<div class="a " style="left:897px;top:686px;width:1px;height:20px;background:#d9d9d9;"></div>
<div class="a " style="left:982px;top:686px;width:1px;height:20px;background:#d9d9d9;"></div>
<div class="a " style="left:984px;top:685px;width:1px;height:22px;background:#fbf7f2;"></div>
<div class="a " style="left:1px;top:706px;width:984px;height:1px;background:#fbf7f2;"></div>
</body>
</html>
